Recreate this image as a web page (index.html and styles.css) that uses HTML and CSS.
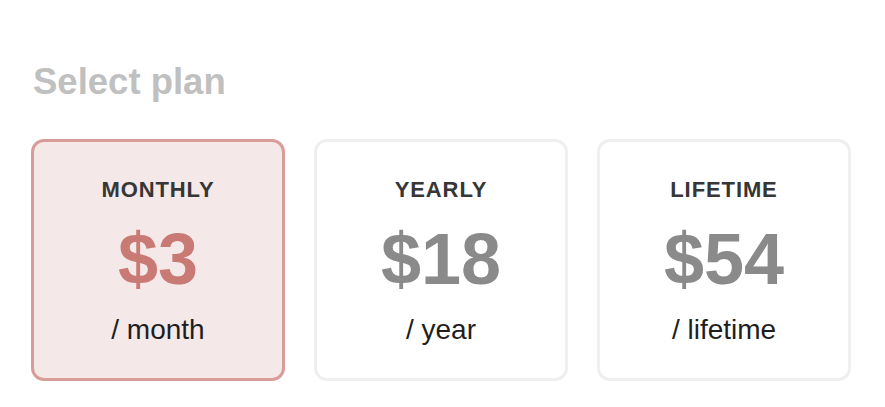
FILE: index.html
```html
<!DOCTYPE html>
<html lang="en">
<head>
<meta charset="utf-8">
<title>Select plan</title>
<link rel="stylesheet" href="styles.css">
</head>
<body>
<main class="page">
  <h1 class="title">Select plan</h1>
  <div class="plans">
    <div class="plan plan--active">
      <div class="plan__name">MONTHLY</div>
      <div class="plan__price">$3</div>
      <div class="plan__period">/ month</div>
    </div>
    <div class="plan">
      <div class="plan__name">YEARLY</div>
      <div class="plan__price">$18</div>
      <div class="plan__period">/ year</div>
    </div>
    <div class="plan">
      <div class="plan__name">LIFETIME</div>
      <div class="plan__price">$54</div>
      <div class="plan__period">/ lifetime</div>
    </div>
  </div>
</main>
</body>
</html>
```
FILE: styles.css
```css
* { box-sizing: border-box; }
html, body { margin: 0; padding: 0; background: #ffffff; }
body { font-family: "Liberation Sans", Arial, Helvetica, sans-serif; }

.page {
  padding: 64px 34px 0 31px;
}

.title {
  margin: 0 0 38px 2px;
  font-size: 36.5px;
  line-height: 1;
  font-weight: 700;
  color: #c0c0c0;
}

.plans {
  display: grid;
  grid-template-columns: repeat(3, 1fr);
  gap: 29px;
}

.plan {
  height: 242px;
  border: 3px solid #efefef;
  border-radius: 13px;
  background: #ffffff;
  display: flex;
  flex-direction: column;
  align-items: center;
  padding-top: 37px;
}

.plan--active {
  border-color: #d99d99;
  background: #f5e8e8;
}

.plan__name {
  font-size: 22px;
  line-height: 1;
  font-weight: 700;
  letter-spacing: 0.9px;
  color: #363636;
}

.plan__price {
  margin-top: 22px;
  font-size: 72px;
  line-height: 1;
  font-weight: 700;
  color: #8a8a8a;
}

.plan--active .plan__price {
  color: #c97a74;
}

.plan__period {
  margin-top: 21px;
  font-size: 28px;
  line-height: 1;
  color: #1e1e1e;
}
```
